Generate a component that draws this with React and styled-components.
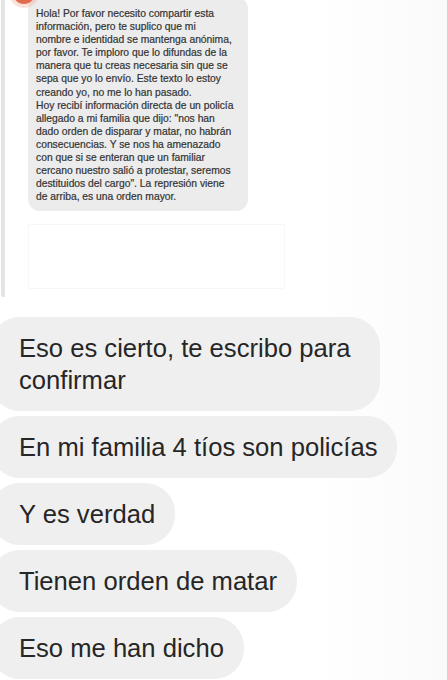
import styled, { createGlobalStyle } from "styled-components";

const GlobalStyle = createGlobalStyle`
  html, body {
    margin: 0;
    padding: 0;
    background: #ffffff;
    overflow: hidden;
  }
  body {
    font-family: "Liberation Sans", Arial, sans-serif;
    color: #262626;
  }
`;

const Screen = styled.main`
  width: 447px;
  height: 680px;
  overflow: hidden;
  background: linear-gradient(90deg, #ffffff 0%, #ffffff 70%, #fafafa 100%);
`;

const Quote = styled.section`
  position: relative;
  margin: -3px 0 0 1px;
  height: 300px;
  box-sizing: border-box;
  border-left: 4px solid #e4e4e4;
  border-bottom-left-radius: 2px;
  padding: 0 0 7px 23px;
  display: flex;
  flex-direction: column;
  gap: 13px;
`;

const Avatar = styled.span`
  position: absolute;
  left: 8px;
  top: -15px;
  width: 22px;
  height: 22px;
  border-radius: 50%;
  background: #e26a4e;
  box-shadow: 0 0 0 4px rgba(240, 170, 150, 0.35);
`;

const SmallBubble = styled.div`
  width: 220px;
  box-sizing: border-box;
  padding: 10px 6px 8px 8px;
  background: #ececec;
  border-radius: 12px;
  font-size: 10.3px;
  line-height: 13.1px;
  color: #333333;
  -webkit-text-stroke: 0.2px #333333;
`;

const SmallLine = styled.div`
  white-space: nowrap;
`;

const Placeholder = styled.div`
  width: 257px;
  height: 65px;
  box-sizing: border-box;
  border: 1px solid #f7f7f7;
  border-radius: 2px;
`;

const Messages = styled.section`
  margin-top: 20px;
  display: flex;
  flex-direction: column;
  align-items: flex-start;
  gap: 5px;
`;

const Bubble = styled.div`
  margin-left: -10px;
  padding: 15px 20px 15px 29px;
  width: ${(p) => (p.$width ? `${p.$width}px` : "auto")};
  box-sizing: border-box;
  background: #efefef;
  border-radius: 30px;
  font-size: 25.6px;
  line-height: 32px;
  color: #262626;
  white-space: nowrap;
`;

const quoteLines = [
  "Hola! Por favor necesito compartir esta",
  "información, pero te suplico que mi",
  "nombre e identidad se mantenga anónima,",
  "por favor. Te imploro que lo difundas de la",
  "manera que tu creas necesaria sin que se",
  "sepa que yo lo envío. Este texto lo estoy",
  "creando yo, no me lo han pasado.",
  "Hoy recibí información directa de un policía",
  "allegado a mi familia que dijo: \"nos han",
  "dado orden de disparar y matar, no habrán",
  "consecuencias. Y se nos ha amenazado",
  "con que si se enteran que un familiar",
  "cercano nuestro salió a protestar, seremos",
  "destituidos del cargo\". La represión viene",
  "de arriba, es una orden mayor.",
];

const messages = [
  { lines: ["Eso es cierto, te escribo para", "confirmar"], width: 390 },
  { lines: ["En mi familia 4 tíos son policías"] },
  { lines: ["Y es verdad"] },
  { lines: ["Tienen orden de matar"] },
  { lines: ["Eso me han dicho"] },
];

export default function App() {
  return (
    <Screen>
      <GlobalStyle />
      <Quote>
        <Avatar />
        <SmallBubble>
          {quoteLines.map((line) => (
            <SmallLine key={line}>{line}</SmallLine>
          ))}
        </SmallBubble>
        <Placeholder />
      </Quote>

      <Messages>
        {messages.map((msg) => (
          <Bubble key={msg.lines[0]} $width={msg.width}>
            {msg.lines.map((line) => (
              <div key={line}>{line}</div>
            ))}
          </Bubble>
        ))}
      </Messages>
    </Screen>
  );
}
